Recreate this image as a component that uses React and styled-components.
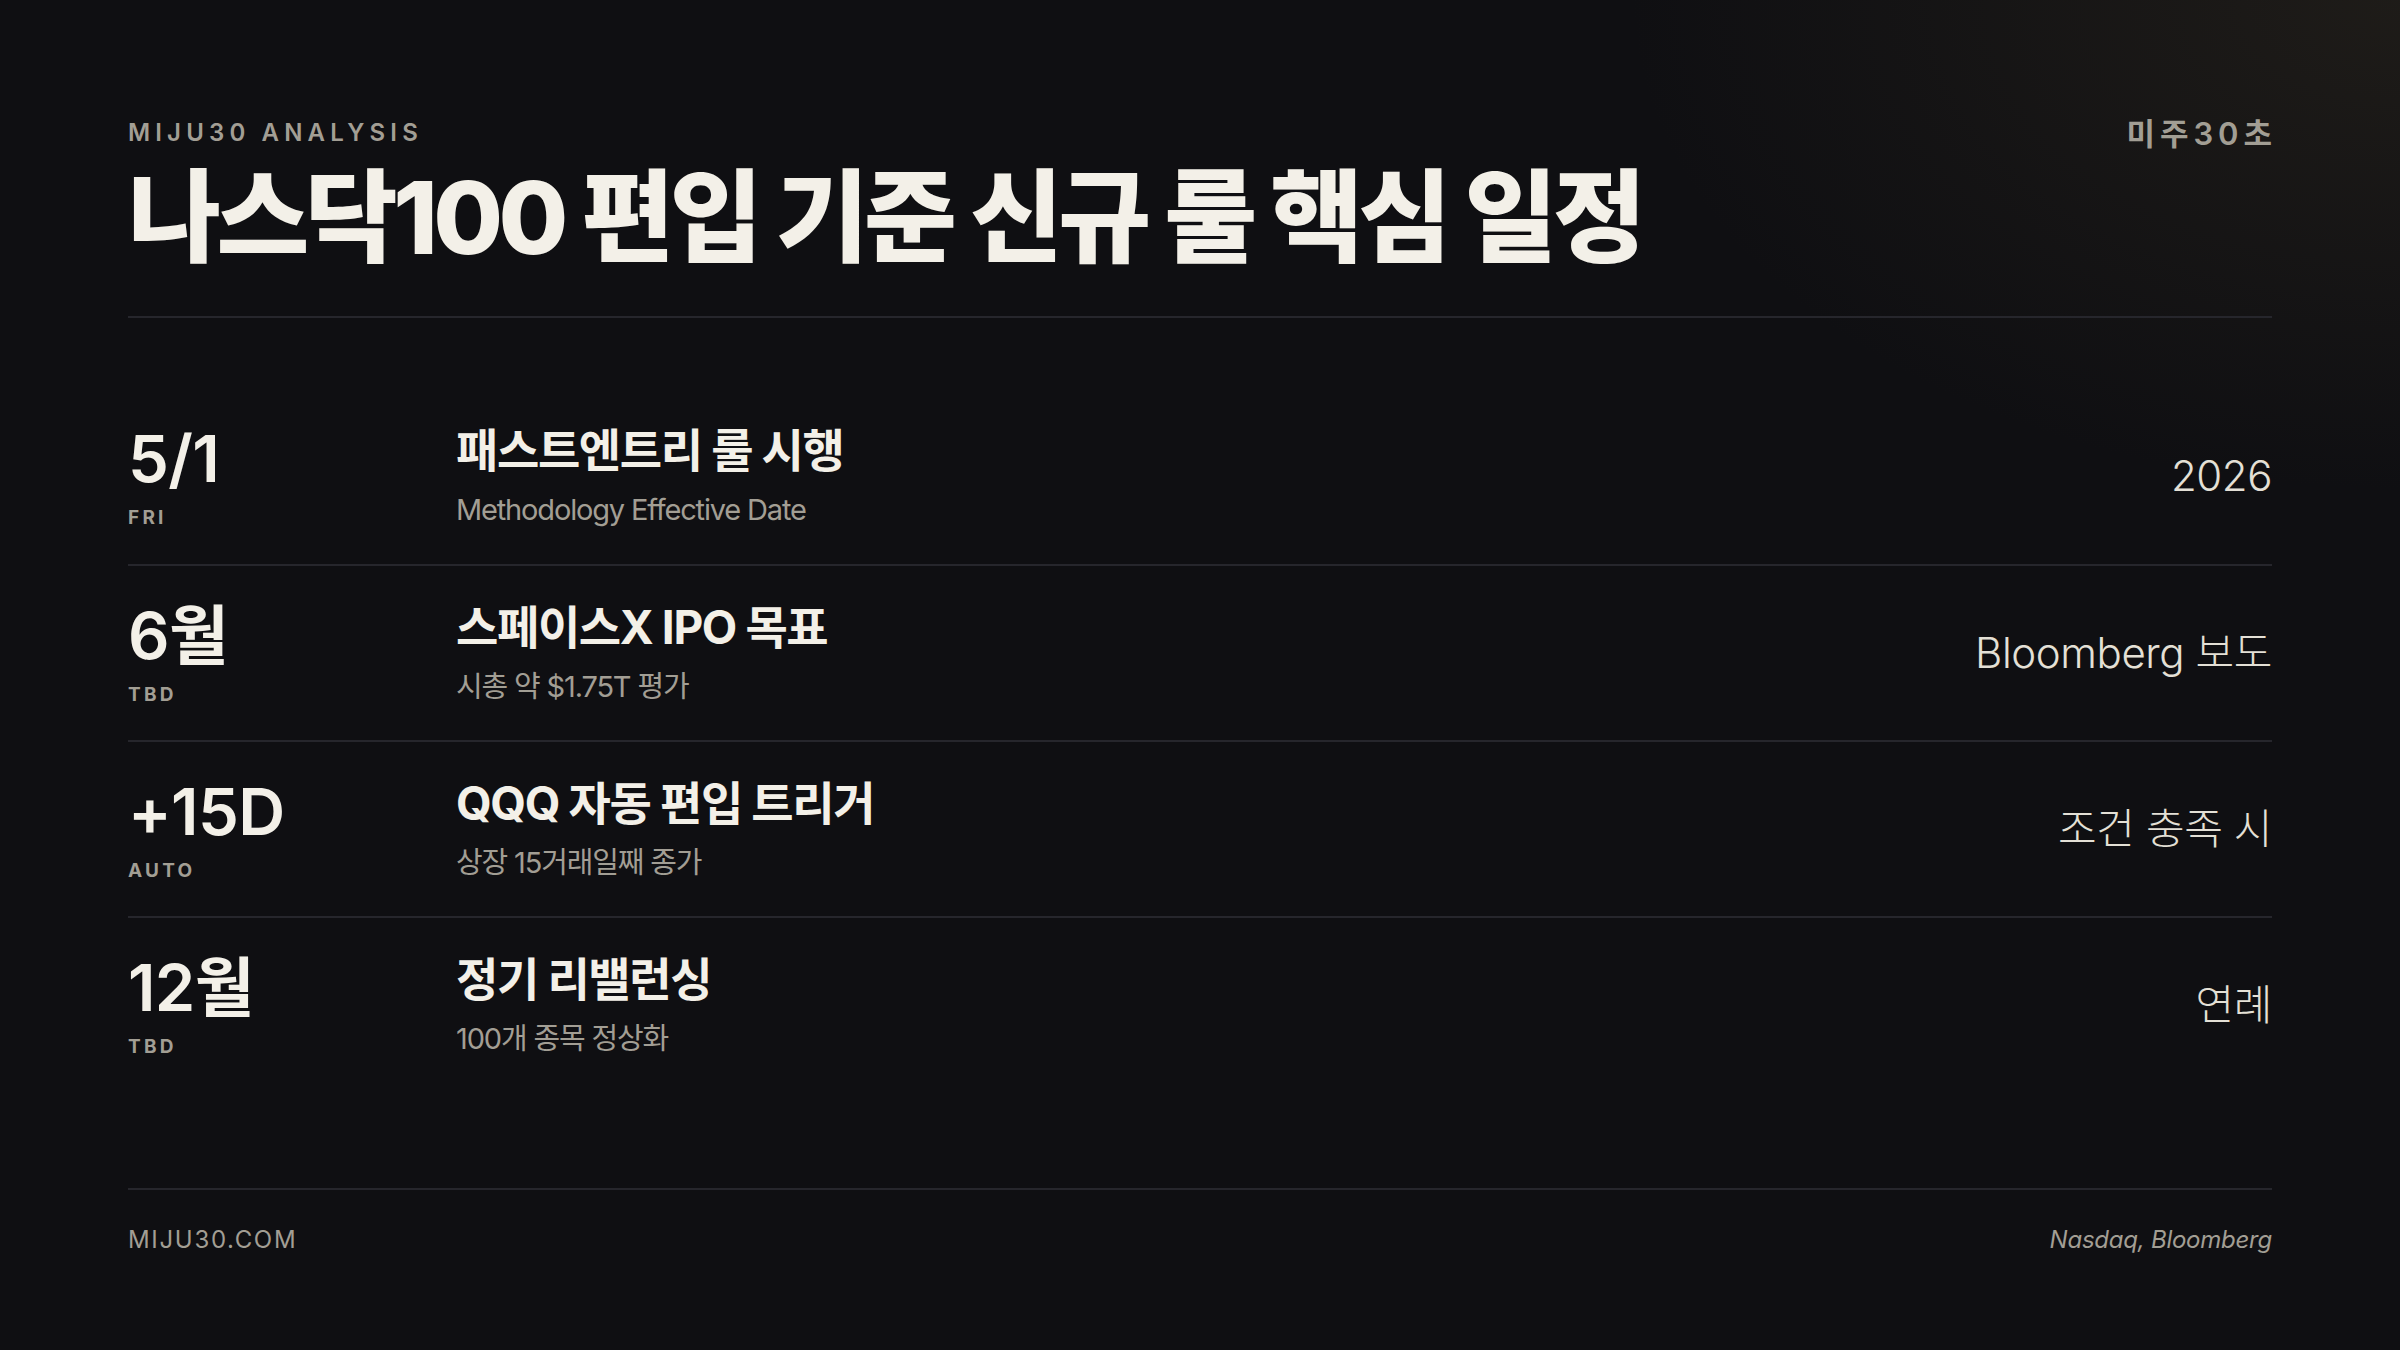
import React from 'react';
import styled, { createGlobalStyle } from 'styled-components';

const GlobalStyle = createGlobalStyle`
  html, body {
    margin: 0;
    padding: 0;
    background: #0f0f12;
  }
  * {
    box-sizing: border-box;
  }
`;

const Page = styled.div`
  width: 2400px;
  height: 1350px;
  padding: 113px 128px 96px;
  display: flex;
  flex-direction: column;
  background:
    radial-gradient(ellipse 1100px 700px at 100% 0%, rgba(62, 54, 38, 0.32), rgba(15, 15, 18, 0) 70%),
    #0f0f12;
  font-family: Inter, "Noto Sans CJK KR", sans-serif;
  color: #f3f0e8;
`;

const Header = styled.header`
  padding-bottom: 42px;
  border-bottom: 2px solid #26262c;
`;

const TopLine = styled.div`
  display: flex;
  justify-content: space-between;
  align-items: center;
`;

const Eyebrow = styled.div`
  font-size: 24px;
  line-height: 29px;
  font-weight: 600;
  letter-spacing: 0.215em;
  color: #a29e94;
`;

const Brand = styled.div`
  font-size: 31px;
  line-height: 34px;
  font-weight: 600;
  letter-spacing: 0.16em;
  color: #a29e94;
  margin-right: -5px;
  margin-top: 4px;
`;

const Title = styled.h1`
  margin: 10px 0 0;
  font-size: 101px;
  line-height: 1.12;
  font-weight: 800;
  letter-spacing: -0.045em;
  color: #f3f0e8;
`;

const List = styled.div`
  padding-top: 70px;
  display: flex;
  flex-direction: column;
`;

const Row = styled.div`
  height: 176px;
  display: grid;
  grid-template-columns: 328px 1fr auto;
  align-items: center;
  border-top: ${p => (p.first ? 'none' : '2px solid #26262c')};
`;

const When = styled.div`
  display: flex;
  flex-direction: column;
`;

const Big = styled.div`
  font-size: 65px;
  line-height: 1;
  font-weight: 600;
  letter-spacing: -0.01em;
  color: #f3f0e8;
`;

const Tag = styled.div`
  margin-top: 17px;
  font-size: 19px;
  line-height: 1;
  font-weight: 700;
  letter-spacing: 0.17em;
  color: #a29e94;
`;

const What = styled.div`
  display: flex;
  flex-direction: column;
`;

const ItemTitle = styled.div`
  font-size: 46px;
  line-height: 1.2;
  font-weight: 700;
  letter-spacing: -0.03em;
  color: #f3f0e8;
`;

const ItemSub = styled.div`
  margin-top: 13px;
  font-size: 29px;
  line-height: 1.3;
  font-weight: 400;
  letter-spacing: -0.04em;
  color: #a29e94;
`;

const Note = styled.div`
  font-size: 42px;
  line-height: 1.2;
  font-weight: 300;
  letter-spacing: -0.01em;
  color: #e4e0d6;
  text-align: right;
`;

const Footer = styled.footer`
  margin-top: auto;
  padding-top: 36px;
  border-top: 2px solid #26262c;
  display: flex;
  justify-content: space-between;
  align-items: center;
`;

const Site = styled.div`
  font-size: 24px;
  line-height: 28px;
  font-weight: 400;
  letter-spacing: 0.07em;
  color: #a29e94;
`;

const Source = styled.div`
  font-size: 24px;
  line-height: 28px;
  font-style: italic;
  font-weight: 400;
  letter-spacing: -0.01em;
  color: #a29e94;
`;

const events = [
  { big: '5/1', tag: 'FRI', title: '패스트엔트리 룰 시행', sub: 'Methodology Effective Date', note: '2026' },
  { big: '6월', tag: 'TBD', title: '스페이스X IPO 목표', sub: '시총 약 $1.75T 평가', note: 'Bloomberg 보도' },
  { big: '+15D', tag: 'AUTO', title: 'QQQ 자동 편입 트리거', sub: '상장 15거래일째 종가', note: '조건 충족 시' },
  { big: '12월', tag: 'TBD', title: '정기 리밸런싱', sub: '100개 종목 정상화', note: '연례' },
];

export default function App() {
  return (
    <>
      <GlobalStyle />
      <Page>
        <Header>
          <TopLine>
            <Eyebrow>MIJU30 ANALYSIS</Eyebrow>
            <Brand>미주30초</Brand>
          </TopLine>
          <Title>나스닥100 편입 기준 신규 룰 핵심 일정</Title>
        </Header>

        <List>
          {events.map((ev, i) => (
            <Row key={i} first={i === 0}>
              <When>
                <Big>{ev.big}</Big>
                <Tag>{ev.tag}</Tag>
              </When>
              <What>
                <ItemTitle>{ev.title}</ItemTitle>
                <ItemSub>{ev.sub}</ItemSub>
              </What>
              <Note>{ev.note}</Note>
            </Row>
          ))}
        </List>

        <Footer>
          <Site>MIJU30.COM</Site>
          <Source>Nasdaq, Bloomberg</Source>
        </Footer>
      </Page>
    </>
  );
}
